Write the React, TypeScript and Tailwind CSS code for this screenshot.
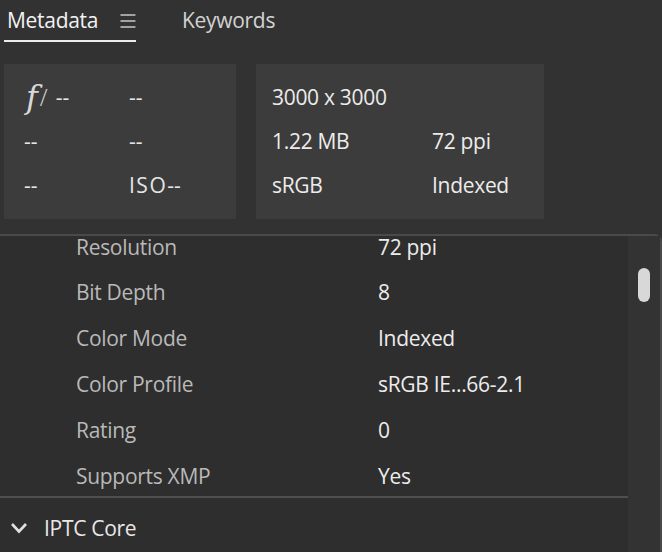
import React from "react";

const rows: [string, string][] = [
  ["Bit Depth", "8"],
  ["Color Mode", "Indexed"],
  ["Color Profile", "sRGB IE...66-2.1"],
  ["Rating", "0"],
  ["Supports XMP", "Yes"],
];

export default function App() {
  return (
    <div
      className="w-[662px] h-[552px] bg-[#323232] overflow-hidden flex flex-col text-[21px] leading-none"
      style={{ fontFamily: '"Open Sans", "Liberation Sans", sans-serif' }}
    >
      {/* Tabs */}
      <div className="flex items-end h-[42px] pl-[4px] shrink-0">
        <div className="flex items-center h-[42px] pl-[3px] w-[132px] border-b-2 border-[#ececec]">
          <span className="text-[#f2f2f2] tracking-[-0.3px]">Metadata</span>
          <svg width="17" height="16" viewBox="0 0 17 16" className="ml-[22px] mt-[1px]">
            <path d="M0.5 1.5H16.5M0.5 8H16.5M0.5 14.5H16.5" stroke="#c8c8c8" strokeWidth="1.5" />
          </svg>
        </div>
        <div className="flex items-center h-[42px] ml-[46px] pb-[2px]">
          <span className="text-[#d2d2d2] tracking-[-0.3px]">Keywords</span>
        </div>
      </div>

      {/* Cards */}
      <div className="flex gap-[20px] pl-[4px] mt-[22px] h-[155px] shrink-0">
        <div className="w-[232px] bg-[#3c3c3c] text-[#e6e6e6]">
          <div className="grid grid-cols-[109px_1fr] pl-[16px] pt-[11px]">
            <div className="h-[44px] flex items-center">
              <span
                className="italic text-[32px] text-[#d8d8d8] ml-[6px] font-light"
                style={{ fontFamily: '"DejaVu Serif", "Liberation Serif", serif' }}
              >
                f
              </span>
              <span className="text-[23px] text-[#d8d8d8] ml-[2px] font-light">/</span>
              <span className="ml-[8px]">--</span>
            </div>
            <div className="h-[44px] flex items-center">--</div>
            <div className="h-[44px] flex items-center pl-[4px]">--</div>
            <div className="h-[44px] flex items-center">--</div>
            <div className="h-[44px] flex items-center pl-[4px]">--</div>
            <div className="h-[44px] flex items-center">
              <span className="tracking-[1.5px]">ISO</span>
              <span>--</span>
            </div>
          </div>
        </div>
        <div className="w-[288px] bg-[#3c3c3c] text-[#ececec]">
          <div className="grid grid-cols-[160px_1fr] pl-[16px] pt-[11px] tracking-[-0.3px]">
            <div className="h-[44px] flex items-center col-span-2">3000 x 3000</div>
            <div className="h-[44px] flex items-center">1.22 MB</div>
            <div className="h-[44px] flex items-center">72 ppi</div>
            <div className="h-[44px] flex items-center">sRGB</div>
            <div className="h-[44px] flex items-center">Indexed</div>
          </div>
        </div>
      </div>

      {/* Panel */}
      <div className="mt-[15px] flex-1 flex border-t-2 border-r-2 border-[#4a4a4a] rounded-tr-[8px] bg-[#2e2e2e]">
        <div className="flex-1 flex flex-col">
          <div className="h-[33px] shrink-0 flex items-start pt-[1px]">
            <span className="w-[378px] pl-[76px] text-[#b9b9b9] tracking-[-0.3px]">Resolution</span>
            <span className="text-[#ececec] tracking-[-0.3px]">72 ppi</span>
          </div>
          {rows.map(([k, v]) => (
            <div key={k} className="h-[46px] shrink-0 flex items-center">
              <span className="w-[378px] pl-[76px] text-[#b9b9b9] tracking-[-0.3px]">{k}</span>
              <span className="text-[#ececec] tracking-[-0.3px]">{v}</span>
            </div>
          ))}
          <div className="h-[2px] shrink-0 bg-[#4f4f4f] -mt-[3px]" />
          <div className="h-[54px] shrink-0 flex items-center pl-[10px] pt-[6px]">
            <svg width="18" height="12" viewBox="0 0 18 12">
              <path d="M2 2L9 9.5L16 2" stroke="#e0e0e0" strokeWidth="2.6" fill="none" />
            </svg>
            <span className="ml-[16px] text-[#e8e8e8] tracking-[-0.3px]">IPTC Core</span>
          </div>
        </div>
        <div className="w-[32px] bg-[#333333] flex justify-center">
          <div className="w-[12px] h-[34px] mt-[32px] rounded-full bg-[#d8d8d8]" />
        </div>
      </div>
    </div>
  );
}
